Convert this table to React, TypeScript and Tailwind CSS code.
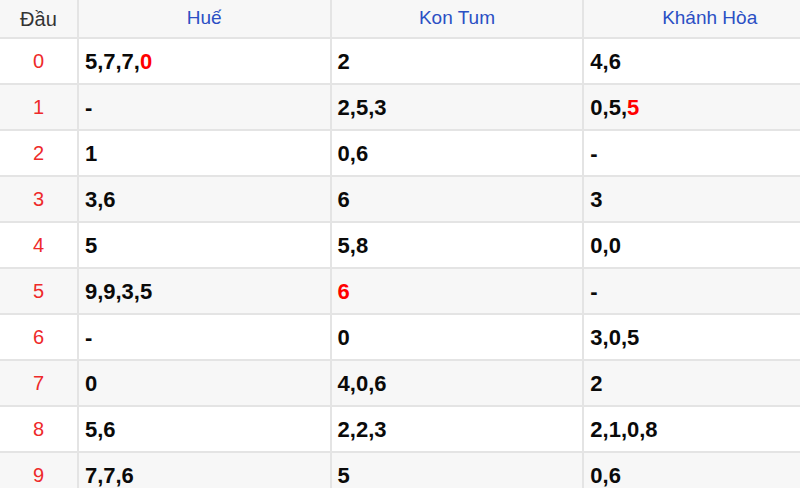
const rows: [string, string[]][] = [
  ["0", ["5,7,7,<0>", "2", "4,6"]],
  ["1", ["-", "2,5,3", "0,5,<5>"]],
  ["2", ["1", "0,6", "-"]],
  ["3", ["3,6", "6", "3"]],
  ["4", ["5", "5,8", "0,0"]],
  ["5", ["9,9,3,5", "<6>", "-"]],
  ["6", ["-", "0", "3,0,5"]],
  ["7", ["0", "4,0,6", "2"]],
  ["8", ["5,6", "2,2,3", "2,1,0,8"]],
  ["9", ["7,7,6", "5", "0,6"]],
];

const provinces = ["Huế", "Kon Tum", "Khánh Hòa"];

// "<x>" marks a number shown in red
function Value({ text }: { text: string }) {
  const parts = text.split(/(<[^>]+>)/).filter(Boolean);
  return (
    <span>
      {parts.map((p, i) =>
        p.startsWith("<") ? (
          <span key={i} className="text-[#ff0000]">
            {p.slice(1, -1)}
          </span>
        ) : (
          <span key={i}>{p}</span>
        )
      )}
    </span>
  );
}

export default function App() {
  return (
    <div className="h-[488px] w-[800px] overflow-hidden bg-white font-['Liberation_Sans',Arial,sans-serif]">
      <div className="w-[837px]">
        <div className="flex h-[39px] border-b-2 border-[#e4e4e4] bg-[#f7f7f7] text-[19px]">
          <div className="flex w-[79px] items-center justify-center border-r-2 border-[#e4e4e4] text-[20px] text-[#333]">Đầu</div>
          {provinces.map((p) => (
            <div key={p} className="flex w-[253px] items-center justify-center border-r-2 border-[#e4e4e4] text-[#2b4fc4]">
              {p}
            </div>
          ))}
        </div>
        {rows.map(([head, vals], idx) => (
          <div
            key={head}
            className={`flex h-[46px] border-b-2 border-[#e4e4e4] ${idx % 2 === 1 ? "bg-[#f7f7f7]" : "bg-white"}`}
          >
            <div className="flex w-[79px] items-center justify-center border-r-2 border-[#e4e4e4] text-[20px] text-[#ee2a2a]">
              {head}
            </div>
            {vals.map((v, i) => (
              <div
                key={i}
                className="flex w-[253px] items-center border-r-2 border-[#e4e4e4] pl-[6px] text-[22px] font-bold text-[#0a0a0a]"
              >
                <Value text={v} />
              </div>
            ))}
          </div>
        ))}
      </div>
    </div>
  );
}
